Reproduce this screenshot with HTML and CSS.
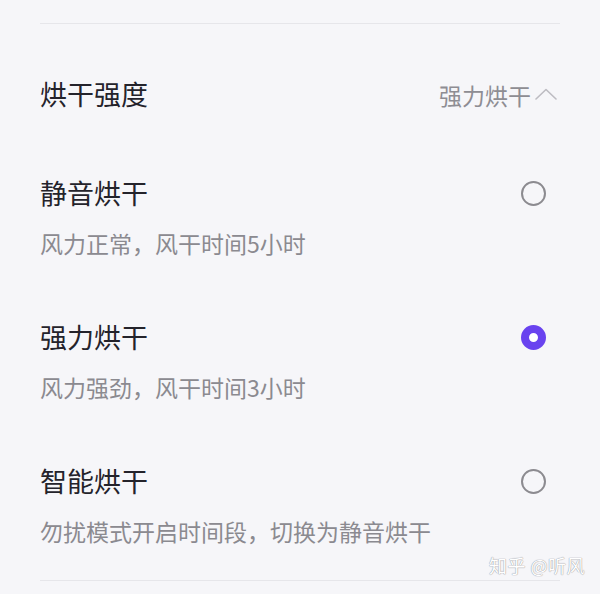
FILE: index.html
```html
<!DOCTYPE html>
<html lang="zh-CN">
<head>
    <meta charset="UTF-8">
    <meta name="viewport" content="width=device-width, initial-scale=1.0">
    <title>烘干强度</title>
    <link rel="stylesheet" href="styles.css">
</head>
<body>
    <div class="page">
        <div class="divider"></div>

        <div class="header-row">
            <span class="header-title">烘干强度</span>
            <span class="header-value">
                强力烘干
                <svg class="chevron" width="22" height="12" viewBox="0 0 22 12">
                    <path d="M1 11 L11 1.5 L21 11" fill="none" stroke="#bdbcc2" stroke-width="1.6" stroke-linecap="round" stroke-linejoin="round"/>
                </svg>
            </span>
        </div>

        <div class="option">
            <div class="option-head">
                <span class="option-title">静音烘干</span>
                <span class="radio"></span>
            </div>
            <div class="option-desc">风力正常，风干时间5小时</div>
        </div>

        <div class="option">
            <div class="option-head">
                <span class="option-title">强力烘干</span>
                <span class="radio checked"></span>
            </div>
            <div class="option-desc">风力强劲，风干时间3小时</div>
        </div>

        <div class="option last">
            <div class="option-head">
                <span class="option-title">智能烘干</span>
                <span class="radio"></span>
            </div>
            <div class="option-desc">勿扰模式开启时间段，切换为静音烘干</div>
        </div>

        <div class="divider bottom"></div>
    </div>

    <div class="watermark">知乎 @听风</div>
</body>
</html>
```

FILE: styles.css
```css
body {
    font-family: "Noto Sans CJK SC", "Noto Sans", sans-serif;
    background-color: #f6f6f9;
    margin: 0;
    padding: 0;
    height: 594px;
    overflow: hidden;
    position: relative;
}

.page {
    padding: 23px 40px 0 40px;
}

.divider {
    height: 1px;
    background-color: #e6e6ea;
}

.divider.bottom {
    margin-top: 33px;
}

.header-row {
    height: 142px;
    display: flex;
    align-items: center;
    justify-content: space-between;
}

.header-title {
    font-size: 27px;
    color: #24232b;
    margin-bottom: 4px;
}

.header-value {
    display: flex;
    align-items: center;
    font-size: 23px;
    color: #8e8d93;
    margin-right: 3px;
}

.chevron {
    margin-left: 4px;
    margin-top: -2px;
}

.option {
    padding-bottom: 51px;
}

.option.last {
    padding-bottom: 0;
}

.option-head {
    height: 54px;
    display: flex;
    align-items: center;
    justify-content: space-between;
}

.option-title {
    font-size: 27px;
    color: #24232b;
    margin-bottom: 1px;
}

.option-desc {
    margin-top: 7px;
    height: 32px;
    line-height: 32px;
    font-size: 23px;
    color: #8b8a90;
}

.radio {
    width: 21px;
    height: 21px;
    border: 2px solid #8c8b90;
    border-radius: 50%;
    margin-right: 14px;
    box-sizing: content-box;
}

.radio.checked {
    width: 9px;
    height: 9px;
    border: 8px solid #6943ef;
    background-color: #fff;
}

.watermark {
    position: absolute;
    right: 15px;
    bottom: 16px;
    font-size: 18px;
    color: #ffffff;
    text-shadow: 0 0 1px #9a9aa0, 0 0 1px #9a9aa0;
    letter-spacing: 0.5px;
}
```
